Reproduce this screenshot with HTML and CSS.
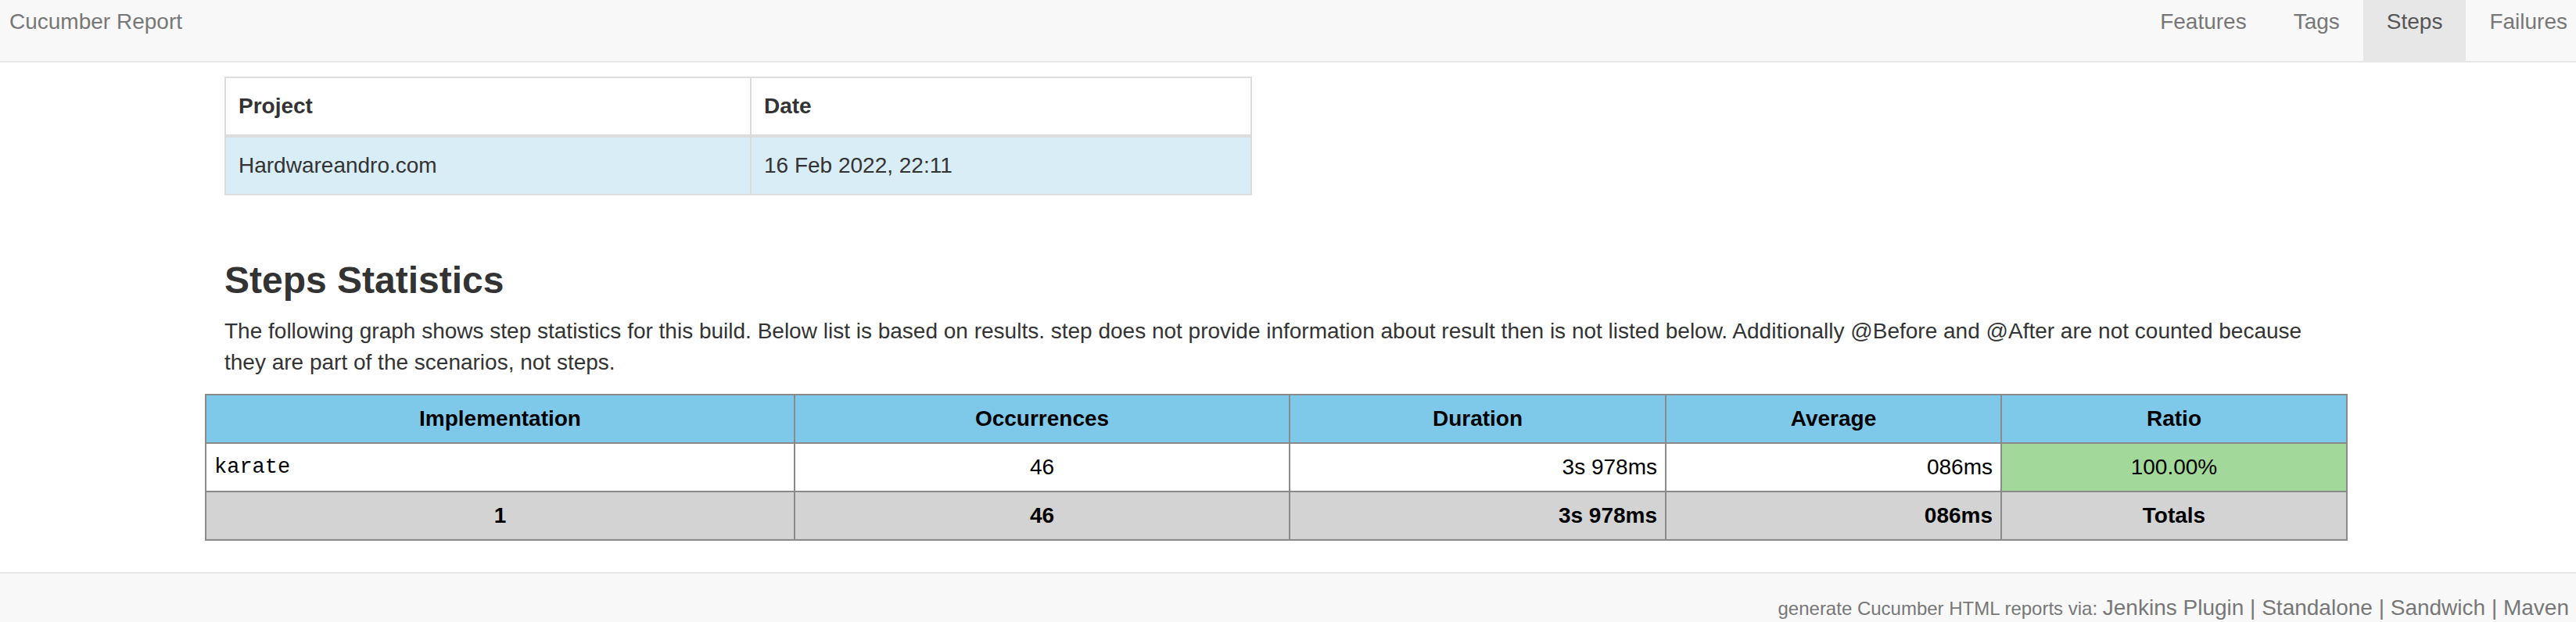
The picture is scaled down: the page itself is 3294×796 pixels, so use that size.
FILE: index.html
```html
<!DOCTYPE html>
<html lang="en">
<head>
<meta charset="utf-8">
<title>Cucumber Report</title>
<link rel="stylesheet" href="styles.css">
</head>
<body>
<nav class="navbar">
  <a class="brand" href="#">Cucumber Report</a>
  <ul class="nav">
    <li><a href="#">Features</a></li>
    <li><a href="#">Tags</a></li>
    <li class="active"><a href="#">Steps</a></li>
    <li><a href="#">Failures</a></li>
  </ul>
</nav>

<main class="content">
  <table class="info-table">
    <thead>
      <tr><th class="col-project">Project</th><th class="col-date">Date</th></tr>
    </thead>
    <tbody>
      <tr class="info"><td>Hardwareandro.com</td><td>16 Feb 2022, 22:11</td></tr>
    </tbody>
  </table>

  <h2 class="title">Steps Statistics</h2>
  <p class="lead-text">The following graph shows step statistics for this build. Below list is based on results. step does not provide information about result then is not listed below. Additionally @Before and @After are not counted because they are part of the scenarios, not steps.</p>

  <table class="stats-table">
    <colgroup>
      <col class="c1"><col class="c2"><col class="c3"><col class="c4"><col class="c5">
    </colgroup>
    <thead>
      <tr><th>Implementation</th><th>Occurrences</th><th>Duration</th><th>Average</th><th>Ratio</th></tr>
    </thead>
    <tbody>
      <tr>
        <td class="location">karate</td>
        <td class="center">46</td>
        <td class="right">3s 978ms</td>
        <td class="right">086ms</td>
        <td class="center passed">100.00%</td>
      </tr>
    </tbody>
    <tfoot>
      <tr class="total">
        <td class="center">1</td>
        <td class="center">46</td>
        <td class="right">3s 978ms</td>
        <td class="right">086ms</td>
        <td class="center">Totals</td>
      </tr>
    </tfoot>
  </table>
</main>

<footer class="footer">
  <span class="via">generate Cucumber HTML reports via:&nbsp;</span>
  <span class="links"><a href="#">Jenkins Plugin</a> | <a href="#">Standalone</a> | <a href="#">Sandwich</a> | <a href="#">Maven</a></span>
</footer>
</body>
</html>
```

FILE: styles.css
```css
html, body {
  margin: 0;
  padding: 0;
  background: #fff;
}
body {
  font-family: "Liberation Sans", Arial, Helvetica, sans-serif;
  font-size: 28px;
  line-height: 40px;
  color: #333;
  overflow: hidden;
}
a { text-decoration: none; }

.navbar {
  display: flex;
  align-items: flex-start;
  height: 78px;
  background: #f8f8f8;
  border-bottom: 2px solid #e7e7e7;
  overflow: hidden;
}
.brand {
  color: #777;
  padding: 8px 0 0 12px;
  font-size: 28px;
  line-height: 40px;
}
.nav {
  list-style: none;
  margin: 0 -19px 0 auto;
  padding: 0;
  display: flex;
  flex-shrink: 0;
}
.nav li a {
  display: block;
  height: 70px;
  padding: 8px 30px 0;
  color: #777;
  line-height: 40px;
}
.nav li.active a {
  background: #e7e7e7;
  color: #555;
}

.content {
  padding: 18px 287px 0;
}

.info-table {
  width: 1314px;
  border-collapse: collapse;
  border: 2px solid #ddd;
}
.info-table th,
.info-table td {
  text-align: left;
  padding: 16px 16px;
  line-height: 40px;
  border: 2px solid #ddd;
}
.info-table th {
  font-weight: bold;
  border-bottom: 4px solid #ddd;
}
.info-table .col-project { width: 638px; }
.info-table tr.info td { background: #d9edf7; }

.title {
  font-size: 48px;
  font-weight: bold;
  line-height: 53px;
  margin: 82px 0 19px;
  color: #333;
}
.lead-text {
  margin: 0 0 20px;
  max-width: 2700px;
}

.stats-table {
  margin-left: -25px;
  width: 2738px;
  table-layout: fixed;
  border-collapse: collapse;
  border: 2px solid #848484;
  color: #000;
}
.stats-table col.c1 { width: 753px; }
.stats-table col.c2 { width: 633px; }
.stats-table col.c3 { width: 481px; }
.stats-table col.c4 { width: 429px; }
.stats-table col.c5 { width: 442px; }
.stats-table th,
.stats-table td {
  border: 2px solid #8a8a8a;
  padding: 10px 10px;
  line-height: 40px;
}
.stats-table th {
  background: #7ec9ea;
  font-weight: bold;
  text-align: center;
}
.stats-table td.location {
  font-family: "Liberation Mono", "Courier New", monospace;
  font-size: 27px;
}
.stats-table td.center { text-align: center; }
.stats-table td.right { text-align: right; }
.stats-table td.passed { background: #a2d99b; }
.stats-table tr.total td {
  background: #d3d3d3;
  font-weight: bold;
}

.footer {
  margin-top: 40px;
  background: #f8f8f8;
  border-top: 2px solid #e7e7e7;
  height: 200px;
  display: flex;
  justify-content: flex-end;
  align-items: baseline;
  padding: 24px 9px 0 0;
  color: #777;
}
.footer .via {
  font-size: 24px;
}
.footer .links {
  font-size: 28px;
}
.footer .links a {
  color: #777;
}
```
